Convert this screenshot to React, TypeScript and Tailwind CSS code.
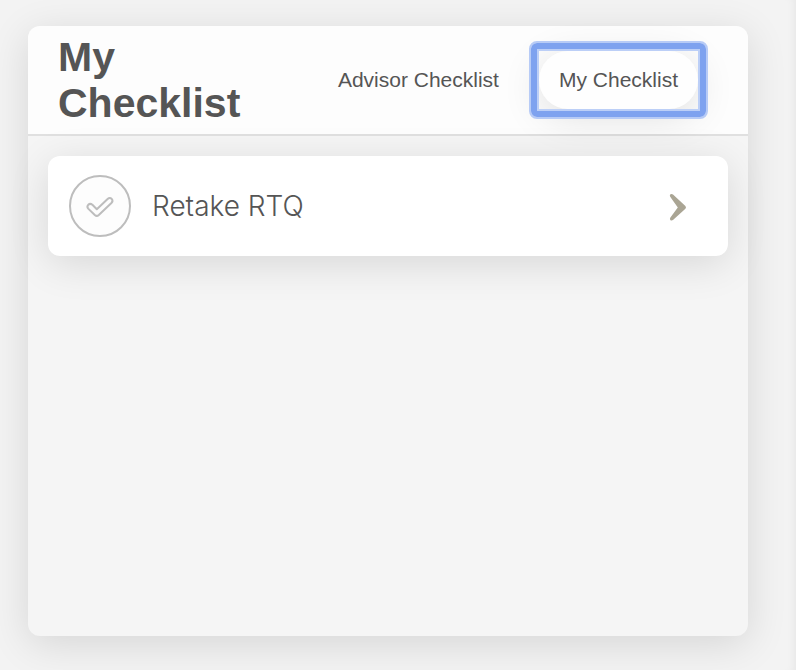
import React, { useState } from 'react';

interface ChecklistTab {
    id: string;
    label: string;
}

interface ChecklistItemProps {
    title: string;
}

const tabs: ChecklistTab[] = [
    { id: 'advisor', label: 'Advisor Checklist' },
    { id: 'mine', label: 'My Checklist' },
];

const FocusRing: React.FC = () => (
    <span aria-hidden="true" className="pointer-events-none absolute -inset-[10px] rounded-lg border-2 border-[#b7cbf6]">
        <span className="block h-full rounded-md border-6 border-[#7ea2ef]">
            <span className="block h-full border-2 border-[#bccff7]" />
        </span>
    </span>
);

const ChecklistItem: React.FC<ChecklistItemProps> = ({ title }) => (
    <button
        type="button"
        className="flex h-[100px] w-full items-center gap-5 rounded-xl bg-white px-5 text-left shadow-[0_8px_40px_rgba(0,0,0,0.12)]"
    >
        <span className="flex size-16 shrink-0 items-center justify-center">
            <svg viewBox="0 0 64 64" className="size-16" fill="none" stroke="#bdbdbd" strokeWidth="2">
                <circle cx="32" cy="32" r="30" fill="#fdfdfd" />
                <path
                    d="M28.8 35.2 L39.6 25 Q41.8 23 43.8 25 Q45.4 27 43.4 29 L30.8 41 Q28.8 42.8 26.8 41 L20.2 34.6 Q18.6 32.6 20.2 30.8 Q22.2 29 24.4 30.8 Z"
                    strokeLinejoin="round"
                />
            </svg>
        </span>
        <span className="grow font-['Inter','Liberation_Sans',sans-serif] text-[28px] leading-8 font-light">{title}</span>
        <svg viewBox="0 0 20 30" className="mr-5 h-[30px] w-5 shrink-0" fill="#aaa594">
            <path d="M2.4 3.3 Q3.8 2.4 5 3.6 L17.4 15 Q18.6 16.4 17.4 17.8 L5 29 Q3.4 30 2.3 28.9 Q1.5 27.8 2.4 26.6 L9.8 16.4 L2.2 5.8 Q1.3 4.3 2.4 3.3Z" />
        </svg>
    </button>
);

const App: React.FC = () => {
    const [activeTab, setActiveTab] = useState('mine');

    return (
        <main className="flex min-h-screen bg-[#f3f3f3] pt-[26px] pr-12 pb-[34px] pl-7 font-['Liberation_Sans',Arial,sans-serif] text-[#555555] shadow-[inset_-8px_0_8px_-6px_rgba(0,0,0,0.05)]">
            <section className="flex grow flex-col rounded-xl bg-[#f5f5f5] shadow-[0_8px_40px_rgba(0,0,0,0.12)]">
                <header className="flex items-center justify-between rounded-t-xl border-b-2 border-[#e0e0e0] bg-[#fdfdfd] py-2 pr-[50px] pl-[30px]">
                    <h1 className="w-48 text-[41px] leading-[46px] font-bold">My Checklist</h1>
                    <nav className="flex gap-5">
                        {tabs.map((tab) => (
                            <button
                                key={tab.id}
                                type="button"
                                aria-pressed={activeTab === tab.id}
                                onClick={() => setActiveTab(tab.id)}
                                className="relative text-[21px] leading-[26px] font-medium whitespace-nowrap outline-none"
                            >
                                <span
                                    className={
                                        activeTab === tab.id
                                            ? 'block rounded-full bg-[#fefefe] px-5 py-4 shadow-[0_8px_40px_rgba(0,0,0,0.12)]'
                                            : 'block px-5 py-4'
                                    }
                                >
                                    {tab.label}
                                </span>
                                {activeTab === tab.id && <FocusRing />}
                            </button>
                        ))}
                    </nav>
                </header>
                <div className="p-5">
                    <ChecklistItem title="Retake RTQ" />
                </div>
            </section>
        </main>
    );
};

export default App;
